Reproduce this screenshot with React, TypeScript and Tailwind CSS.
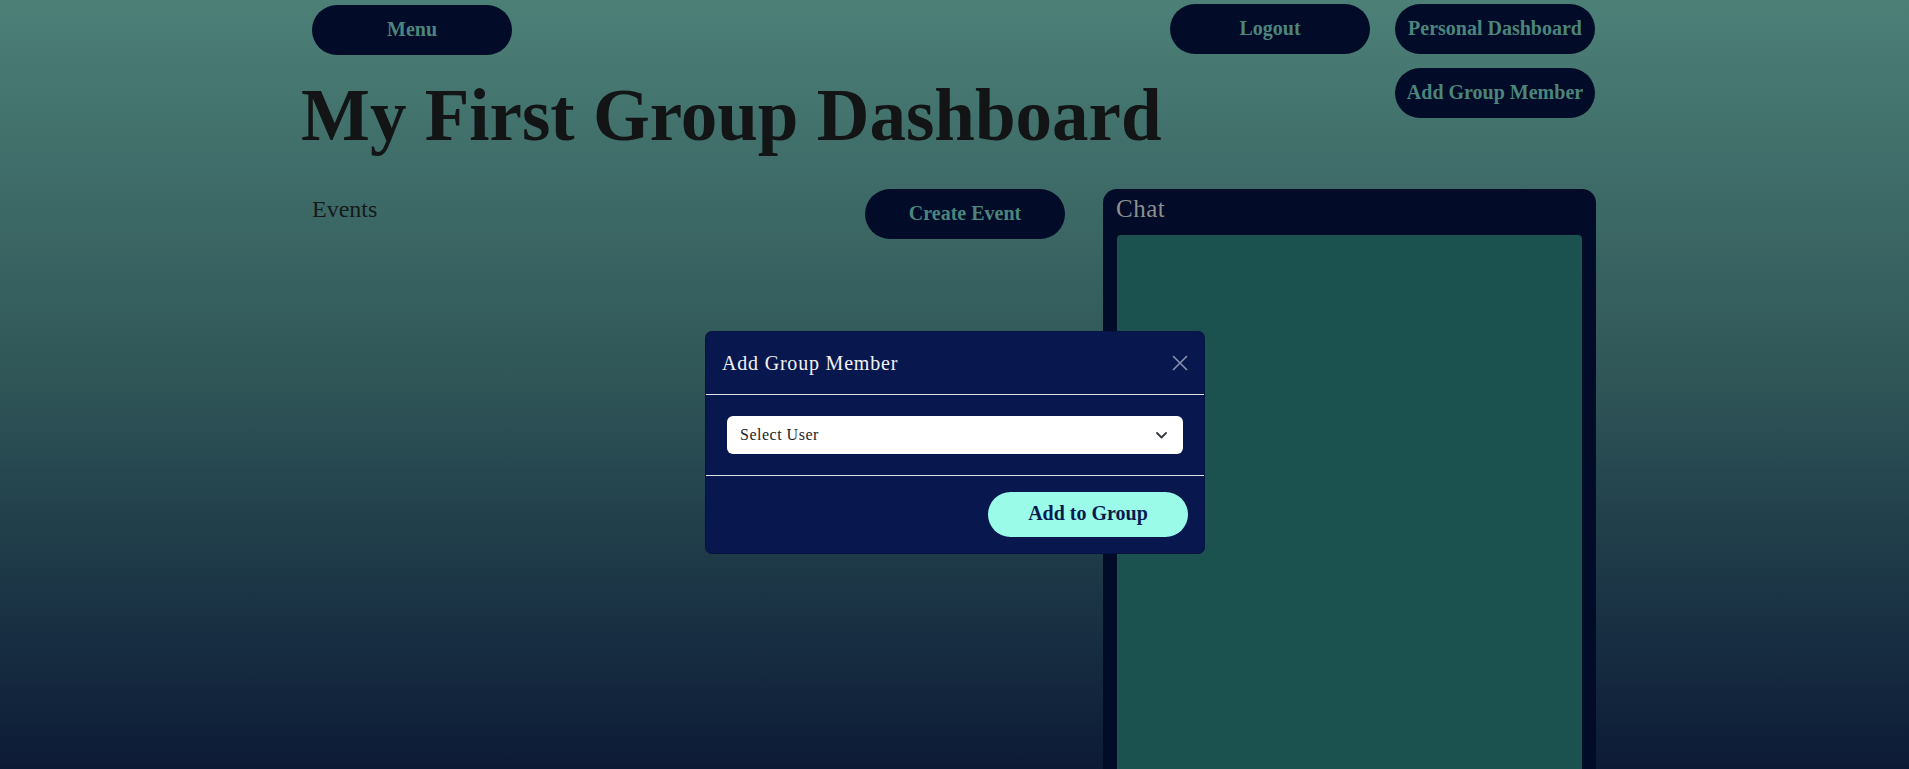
import React from "react";

function NavButton({ label, className = "" }: { label: string; className?: string }) {
  return (
    <button
      className={`flex h-[50px] w-[200px] items-center justify-center rounded-full bg-[#020b27] pb-[2px] text-[20px] font-bold text-[#4b857c] ${className}`}
    >
      {label}
    </button>
  );
}

export default function App() {
  return (
    <div className="relative h-[769px] w-full overflow-hidden bg-gradient-to-b from-[#4c8077] via-[#2f5557] to-[#0d1a36] font-['Liberation_Serif',serif]">
      <div className="ml-[301px] w-[1295px]">
        {/* Row A */}
        <div className="flex h-[64px] items-start justify-between">
          <NavButton label="Menu" className="ml-[11px] mt-[5px] h-[49px]" />
          <div className="mr-[1px] mt-[4px] flex gap-[25px]">
            <NavButton label="Logout" />
            <NavButton label="Personal Dashboard" />
          </div>
        </div>

        {/* Row B */}
        <div className="flex items-start justify-between">
          <h1 className="mt-[9px] text-[73px] font-bold leading-[86px] text-[#121416]">
            My First Group Dashboard
          </h1>
          <NavButton label="Add Group Member" className="mr-[1px] mt-[4px] text-[19.5px]" />
        </div>

        {/* Row C */}
        <div className="mt-[30px] flex items-start">
          <div className="flex w-[764px] items-start justify-between pl-[11px]">
            <div className="mt-[2px] text-[24px] leading-[36px] text-[#141a1a]">Events</div>
            <NavButton label="Create Event" className="h-[48px]" />
          </div>
          <div className="ml-[38px] h-[620px] w-[493px] rounded-[14px] bg-[#020b28] px-[14px]">
            <div className="-ml-[1px] pt-[2px] text-[25px] leading-[36px] tracking-[0.5px] text-[#8e9090]">
              Chat
            </div>
            <div className="mt-[8px] h-[560px] rounded-[4px] bg-[#1b5250]" />
          </div>
        </div>
      </div>

      {/* Modal */}
      <div className="absolute left-[705px] top-[331px] w-[500px] rounded-[7px] border border-[#00000033] bg-[#08184f]">
        <div className="flex items-center justify-between border-b border-[#dee2e6] p-4">
          <div className="text-[20px] leading-[30px] tracking-[0.8px] text-[#f3f3f3]">Add Group Member</div>
          <svg width="16" height="16" viewBox="0 0 16 16" className="text-[#8a90ab]">
            <path d="M1 1L15 15M15 1L1 15" stroke="currentColor" strokeWidth="1.6" fill="none" />
          </svg>
        </div>
        <div className="p-[21px]">
          <div className="flex h-[38px] items-center justify-between rounded-[6px] bg-white pl-[13px] pr-[16px]">
            <span className="text-[16px] tracking-[0.5px] text-[#212529]">Select User</span>
            <svg width="11" height="7" viewBox="0 0 11 7">
              <path d="M1 1L5.5 5.5L10 1" stroke="#343a40" strokeWidth="1.8" fill="none" strokeLinecap="round" strokeLinejoin="round" />
            </svg>
          </div>
        </div>
        <div className="flex justify-end border-t border-[#dee2e6] p-4">
          <button className="flex h-[45px] w-[200px] items-center justify-center rounded-full bg-[#99fbe8] pb-[3px] text-[20px] font-semibold text-[#0a1a4f]">
            Add to Group
          </button>
        </div>
      </div>
    </div>
  );
}
